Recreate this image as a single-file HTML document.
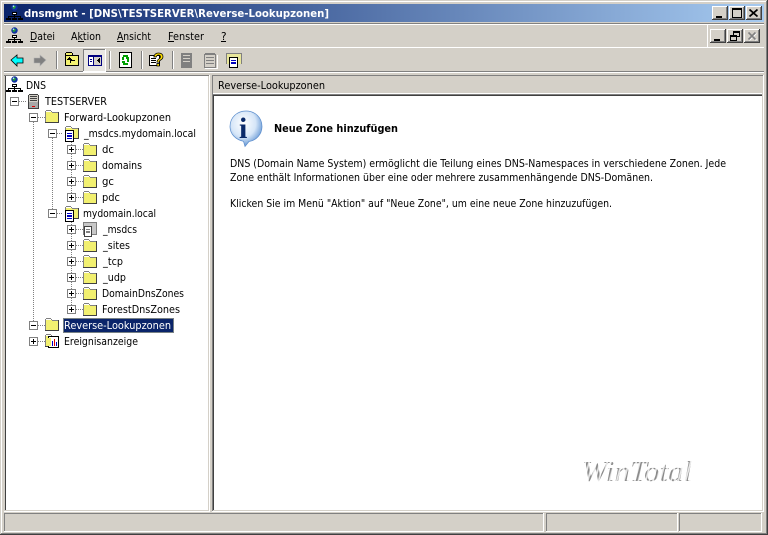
<!DOCTYPE html>
<html><head><meta charset="utf-8"><title>dnsmgmt</title>
<style>
html,body{margin:0;padding:0;background:#d4d0c8;overflow:hidden}
svg{display:block}
text{font-family:"DejaVu Sans",sans-serif;font-size:10.5px;fill:#000;white-space:pre}
.c{shape-rendering:crispEdges}
</style></head><body>
<svg width="768" height="535" viewBox="0 0 768 535" xmlns="http://www.w3.org/2000/svg">
<defs>
<linearGradient id="tb" x1="0" x2="1" y1="0" y2="0"><stop offset="0" stop-color="#0a246a"/><stop offset="1" stop-color="#a6caf0"/></linearGradient>
<pattern id="wm" width="3.500" height="3.500" patternUnits="userSpaceOnUse" patternTransform="rotate(15)"><rect width="3.500" height="3.500" fill="#e8e8e8"/><rect width="1.800" height="3.500" fill="#8a8a8a"/></pattern>
<radialGradient id="ib" cx=".42" cy=".35" r=".7"><stop offset="0" stop-color="#fff"/><stop offset=".55" stop-color="#d6e6f8"/><stop offset="1" stop-color="#4d86cc"/></radialGradient>

<symbol id="folder" width="16" height="16" viewBox="0 0 16 16" overflow="visible">
<g class="c"><rect x="1" y="4" width="13" height="10" fill="#f2f070"/>
<rect x="2" y="2" width="5" height="1" fill="#808080"/><rect x="1" y="3" width="1" height="11" fill="#808080"/><rect x="7" y="3" width="1" height="1" fill="#808080"/><rect x="2" y="3" width="5" height="1" fill="#fff"/>
<rect x="8" y="4" width="6" height="1" fill="#808080"/><rect x="14" y="4" width="1" height="11" fill="#404040"/><rect x="1" y="14" width="14" height="1" fill="#404040"/></g>
</symbol>
<symbol id="zone" width="18" height="18" viewBox="0 0 18 18" overflow="visible">
<use href="#folder" x="1" y="-1"/>
<g class="c"><rect x="2" y="5" width="9" height="12" fill="#000"/><rect x="3" y="6" width="7" height="10" fill="#fff"/><rect x="4" y="8" width="5" height="1" fill="#0000c0"/><rect x="4" y="10" width="5" height="2" fill="#0000c0"/><rect x="4" y="13" width="5" height="1" fill="#0000c0"/></g>
</symbol>
<symbol id="net" width="17" height="17" viewBox="0 0 17 17" overflow="visible">
<circle cx="8.5" cy="3.5" r="3.2" fill="#1030a0"/><path d="M6.500 2.500l2-1 1.500 1-1 2-2 .5z" fill="#20a040"/><circle cx="7.500" cy="2.200" r=".8" fill="#bfe0ff"/>
<g class="c"><rect x="6" y="8" width="5" height="3" fill="#000"/><rect x="7" y="9" width="3" height="1" fill="#fff"/>
<rect x="2" y="12" width="13" height="1" fill="#000"/><rect x="2" y="12" width="1" height="2" fill="#000"/><rect x="14" y="12" width="1" height="2" fill="#000"/><rect x="8" y="11" width="1" height="3" fill="#000"/>
<rect x="0" y="14" width="5" height="2" fill="#000"/><rect x="6" y="14" width="5" height="2" fill="#000"/><rect x="12" y="14" width="5" height="2" fill="#000"/></g>
</symbol>
<symbol id="plus" width="9" height="9" viewBox="0 0 9 9" overflow="visible"><g class="c"><rect x=".5" y=".5" width="8" height="8" fill="#fff" stroke="#808080"/><rect x="2" y="4" width="5" height="1" fill="#000"/><rect x="4" y="2" width="1" height="5" fill="#000"/></g></symbol>
<symbol id="minus" width="9" height="9" viewBox="0 0 9 9" overflow="visible"><g class="c"><rect x=".5" y=".5" width="8" height="8" fill="#fff" stroke="#808080"/><rect x="2" y="4" width="5" height="1" fill="#000"/></g></symbol>
<symbol id="btn" width="16" height="14" viewBox="0 0 16 14" overflow="visible"><g class="c"><rect width="16" height="14" fill="#404040"/><rect width="15" height="13" fill="#fff"/><rect x="1" y="1" width="14" height="12" fill="#808080"/><rect x="1" y="1" width="13" height="11" fill="#d4d0c8"/></g></symbol>
</defs>

<rect width="768" height="535" fill="#d4d0c8"/>
<g class="c">
<rect x="1" y="1" width="766" height="1" fill="#fff"/><rect x="1" y="1" width="1" height="532" fill="#fff"/>
<rect x="767" y="0" width="1" height="535" fill="#404040"/><rect x="766" y="1" width="1" height="533" fill="#808080"/>
<rect x="0" y="534" width="768" height="1" fill="#404040"/><rect x="1" y="533" width="766" height="1" fill="#808080"/>
<rect x="4" y="4" width="760" height="18" fill="url(#tb)"/>
<rect x="4" y="23" width="760" height="1" fill="#808080"/>
<rect x="4" y="24" width="760" height="1" fill="#fff"/>
<rect x="4" y="47" width="760" height="1" fill="#fff"/>
<rect x="707" y="24" width="1" height="23" fill="#fff"/>
<rect x="4" y="71" width="760" height="1" fill="#808080"/>
<rect x="4" y="72" width="760" height="1" fill="#fff"/>
<rect x="56" y="51" width="1" height="18" fill="#808080"/><rect x="57" y="51" width="1" height="18" fill="#fff"/>
<rect x="109" y="51" width="1" height="18" fill="#808080"/><rect x="110" y="51" width="1" height="18" fill="#fff"/>
<rect x="141" y="51" width="1" height="18" fill="#808080"/><rect x="142" y="51" width="1" height="18" fill="#fff"/>
<rect x="172" y="51" width="1" height="18" fill="#808080"/><rect x="173" y="51" width="1" height="18" fill="#fff"/>
<!-- left pane -->
<rect x="5" y="75" width="205" height="437" fill="#fff"/>
<rect x="4" y="75" width="205" height="1" fill="#808080"/>
<rect x="5" y="76" width="1" height="434" fill="#404040"/>
<rect x="208" y="76" width="1" height="435" fill="#d4d0c8"/><rect x="5" y="510" width="204" height="1" fill="#d4d0c8"/>
<rect x="209" y="75" width="1" height="437" fill="#fff"/><rect x="4" y="511" width="206" height="1" fill="#fff"/>
<!-- right pane -->
<rect x="212" y="75" width="552" height="437" fill="#fff"/>
<rect x="212" y="75" width="552" height="1" fill="#808080"/><rect x="212" y="75" width="1" height="436" fill="#808080"/>
<rect x="213" y="76" width="550" height="19" fill="#d4d0c8"/>
<rect x="213" y="96" width="1" height="414" fill="#404040"/>
<rect x="213" y="93" width="550" height="1" fill="#fff"/>
<rect x="213" y="94" width="550" height="1" fill="#808080"/><rect x="213" y="95" width="550" height="1" fill="#404040"/>
<rect x="762" y="76" width="1" height="435" fill="#d4d0c8"/><rect x="213" y="510" width="550" height="1" fill="#d4d0c8"/>
<rect x="763" y="75" width="1" height="437" fill="#fff"/><rect x="212" y="511" width="552" height="1" fill="#fff"/>
<!-- status -->
<rect x="4" y="513" width="540" height="1" fill="#808080"/><rect x="4" y="513" width="1" height="18" fill="#808080"/><rect x="4" y="531" width="540" height="1" fill="#fff"/><rect x="543" y="513" width="1" height="19" fill="#fff"/>
<rect x="546" y="513" width="131" height="1" fill="#808080"/><rect x="546" y="513" width="1" height="18" fill="#808080"/><rect x="546" y="531" width="132" height="1" fill="#fff"/><rect x="677" y="513" width="1" height="19" fill="#fff"/>
<rect x="679" y="513" width="83" height="1" fill="#808080"/><rect x="679" y="513" width="1" height="18" fill="#808080"/><rect x="679" y="531" width="83" height="1" fill="#fff"/><rect x="761" y="513" width="1" height="19" fill="#fff"/>
</g>

<!-- title content -->
<use href="#net" x="6" y="4"/>
<text x="24" y="17" textLength="305" lengthAdjust="spacingAndGlyphs" style="font-weight:bold;font-size:11px;fill:#fff">dnsmgmt - [DNS\TESTSERVER\Reverse-Lookupzonen]</text>
<use href="#btn" x="712" y="6"/><use href="#btn" x="729" y="6"/><use href="#btn" x="746" y="6"/>
<g class="c">
<rect x="716" y="16" width="6" height="2" fill="#000"/>
<rect x="732.500" y="8.500" width="9" height="9" fill="none" stroke="#000"/><rect x="732" y="8" width="10" height="2" fill="#000"/>
</g>
<path d="M749.500 9.500l8 7M757.500 9.500l-8 7" stroke="#000" stroke-width="1.800" fill="none"/>

<!-- menu -->
<use href="#net" x="6" y="27"/>
<text x="30" y="40" textLength="25" lengthAdjust="spacingAndGlyphs">Datei</text>
<text x="71" y="40" textLength="30" lengthAdjust="spacingAndGlyphs">Aktion</text>
<text x="117" y="40" textLength="34" lengthAdjust="spacingAndGlyphs">Ansicht</text>
<text x="168" y="40" textLength="36" lengthAdjust="spacingAndGlyphs">Fenster</text>
<text x="221" y="40">?</text>
<g class="c" fill="#000"><rect x="30" y="41" width="7" height="1"/><rect x="78" y="41" width="6" height="1"/><rect x="117" y="41" width="7" height="1"/><rect x="168" y="41" width="6" height="1"/><rect x="221" y="41" width="5" height="1"/></g>
<use href="#btn" x="710" y="29"/><use href="#btn" x="727" y="29"/><use href="#btn" x="744" y="29"/>
<g class="c">
<rect x="714" y="39" width="6" height="2" fill="#000"/>
<rect x="733.500" y="31.500" width="6" height="5" fill="none" stroke="#000"/><rect x="733" y="31" width="7" height="2" fill="#000"/>
<rect x="730.500" y="35.500" width="6" height="5" fill="#d4d0c8" stroke="#000"/><rect x="730" y="35" width="7" height="2" fill="#000"/>
</g>
<path d="M748.500 32.500l7 7M755.500 32.500l-7 7" stroke="#fff" stroke-width="1.600" transform="translate(.7 .7)" fill="none"/>
<path d="M748.500 32.500l7 7M755.500 32.500l-7 7" stroke="#808080" stroke-width="1.600" fill="none"/>

<!-- toolbar icons -->
<path d="M11 60l6-5v3h6v5h-6v3z" fill="#00ffff" stroke="#000" stroke-width=".8"/>
<path d="M46 60l-6-5v3h-6v5h6v3z" fill="#808080" stroke="#b0b0b0" stroke-width=".6"/>
<g class="c">
<rect x="65" y="55" width="14" height="11" fill="#f2f070"/>
<rect x="65" y="55" width="14" height="1" fill="#000"/><rect x="65" y="55" width="1" height="11" fill="#000"/><rect x="78" y="55" width="1" height="11" fill="#000"/><rect x="65" y="65" width="14" height="1" fill="#000"/>
<rect x="66" y="52" width="6" height="1" fill="#000"/><rect x="65" y="53" width="1" height="2" fill="#000"/><rect x="72" y="53" width="1" height="2" fill="#000"/><rect x="66" y="53" width="6" height="2" fill="#f2f070"/>
<rect x="70" y="60" width="5" height="1" fill="#000"/><rect x="70" y="60" width="1" height="3" fill="#000"/><rect x="69" y="57" width="1" height="1" fill="#000"/><rect x="68" y="58" width="3" height="1" fill="#000"/><rect x="67" y="59" width="5" height="1" fill="#000"/>
<rect x="83" y="49" width="22" height="22" fill="#e9e7e3"/>
<rect x="83" y="49" width="22" height="1" fill="#808080"/><rect x="83" y="49" width="1" height="22" fill="#808080"/><rect x="105" y="49" width="1" height="23" fill="#fff"/><rect x="83" y="71" width="23" height="1" fill="#fff"/>
<rect x="88" y="55" width="14" height="11" fill="#000080"/><rect x="89" y="57" width="4" height="8" fill="#fff"/><rect x="94" y="57" width="7" height="8" fill="#d4d0c8"/><rect x="90" y="59" width="2" height="1" fill="#000080"/><rect x="90" y="61" width="2" height="1" fill="#000080"/>
<rect x="97" y="60" width="1" height="1" fill="#000"/><rect x="98" y="59" width="1" height="3" fill="#000"/><rect x="99" y="58" width="1" height="5" fill="#000"/>
<rect x="119.500" y="52.500" width="12" height="15" fill="#fff" stroke="#000"/>
<rect x="123" y="55" width="5" height="2" fill="#00a000"/><rect x="122" y="57" width="2" height="3" fill="#00a000"/><rect x="127" y="59" width="2" height="3" fill="#00a000"/><rect x="123" y="63" width="5" height="2" fill="#00a000"/><rect x="126" y="57" width="3" height="2" fill="#00a000"/><rect x="122" y="61" width="3" height="2" fill="#00a000"/>
<rect x="149.500" y="55.500" width="10" height="10" fill="#fff" stroke="#000"/>
<rect x="151" y="58" width="5" height="1" fill="#000"/><rect x="151" y="60" width="5" height="1" fill="#000"/><rect x="151" y="62" width="5" height="1" fill="#000"/>
<rect x="181" y="53" width="11" height="15" fill="#808080"/><rect x="183" y="55" width="7" height="1" fill="#d4d0c8"/><rect x="183" y="58" width="7" height="1" fill="#d4d0c8"/><rect x="183" y="61" width="7" height="1" fill="#d4d0c8"/>
<rect x="204.500" y="54.500" width="11" height="13" fill="#d4d0c8" stroke="#808080"/><rect x="205" y="53" width="10" height="1" fill="#808080"/><rect x="206" y="57" width="8" height="1" fill="#808080"/><rect x="206" y="60" width="8" height="1" fill="#808080"/><rect x="206" y="63" width="8" height="1" fill="#808080"/><rect x="217" y="55" width="1" height="14" fill="#fff"/><rect x="205" y="68" width="13" height="1" fill="#fff"/>
<rect x="226" y="53" width="16" height="11" fill="#e8e69a"/>
<rect x="226" y="53" width="15" height="1" fill="#808080"/><rect x="226" y="53" width="1" height="11" fill="#808080"/><rect x="241" y="53" width="1" height="11" fill="#808080"/>
<rect x="229" y="57" width="9" height="11" fill="#000"/><rect x="230" y="58" width="7" height="9" fill="#fff"/><rect x="231" y="60" width="5" height="1" fill="#0000c0"/><rect x="231" y="62" width="5" height="2" fill="#0000c0"/>
</g>
<text x="153" y="66" style="font-family:'Liberation Sans',sans-serif;font-weight:bold;font-size:18px;fill:#ffe000;stroke:#000;stroke-width:.8">?</text>

<!-- tree lines -->
<g stroke="#808080" stroke-dasharray="1 1" fill="none" class="c">
<path d="M33.500 122V326M52.500 138V214M71.500 138V198M71.500 218V310"/>
<path d="M19 101.500H27M38 117.500H45M57 133.500H63M76 149.500H83M76 165.500H83M76 181.500H83M76 197.500H83M57 213.500H63M76 229.500H83M76 245.500H83M76 261.500H83M76 277.500H83M76 293.500H83M76 309.500H83M38 325.500H45M38 341.500H45"/>
</g>
<use href="#minus" x="10" y="97"/><use href="#minus" x="29" y="113"/><use href="#minus" x="48" y="129"/><use href="#minus" x="48" y="209"/><use href="#minus" x="29" y="321"/><use href="#plus" x="29" y="337"/>
<use href="#plus" x="67" y="145"/><use href="#plus" x="67" y="161"/><use href="#plus" x="67" y="177"/><use href="#plus" x="67" y="193"/>
<use href="#plus" x="67" y="225"/><use href="#plus" x="67" y="241"/><use href="#plus" x="67" y="257"/><use href="#plus" x="67" y="273"/><use href="#plus" x="67" y="289"/><use href="#plus" x="67" y="305"/>

<!-- tree icons -->
<use href="#net" x="6" y="76"/>
<g class="c"><rect x="29" y="94" width="9" height="14" fill="#d4d0c8"/><rect x="29" y="94" width="9" height="1" fill="#404040"/><rect x="28" y="95" width="1" height="14" fill="#404040"/><rect x="38" y="95" width="1" height="14" fill="#404040"/><rect x="28" y="108" width="11" height="1" fill="#404040"/><rect x="30" y="96" width="7" height="1" fill="#404040"/><rect x="30" y="98" width="7" height="1" fill="#404040"/><rect x="30" y="100" width="7" height="1" fill="#404040"/><rect x="29" y="102" width="9" height="6" fill="#a8a8a8"/><rect x="32" y="106" width="3" height="1" fill="#e00000"/></g>
<use href="#folder" x="44" y="108"/>
<use href="#zone" x="63" y="125"/>
<use href="#folder" x="82" y="141"/><use href="#folder" x="82" y="157"/><use href="#folder" x="82" y="173"/><use href="#folder" x="82" y="189"/>
<use href="#zone" x="63" y="205"/>
<g class="c"><rect x="83.500" y="222.500" width="13" height="12" fill="#c8c8c8" stroke="#808080"/><rect x="84" y="226" width="8" height="11" fill="#404040"/><rect x="85" y="227" width="6" height="9" fill="#fff"/><rect x="86" y="229" width="4" height="1" fill="#808080"/><rect x="86" y="231" width="4" height="2" fill="#808080"/></g>
<use href="#folder" x="82" y="237"/><use href="#folder" x="82" y="253"/><use href="#folder" x="82" y="269"/><use href="#folder" x="82" y="285"/><use href="#folder" x="82" y="301"/>
<use href="#folder" x="44" y="316"/>
<use href="#folder" x="44" y="332"/>
<g class="c"><rect x="48" y="336" width="11" height="12" fill="#000"/><rect x="49" y="337" width="9" height="10" fill="#fff"/><rect x="48" y="338" width="3" height="8" fill="#f2f070"/><rect x="52" y="341" width="1" height="5" fill="#0000c0"/><rect x="54" y="339" width="1" height="7" fill="#e00000"/><rect x="56" y="342" width="1" height="4" fill="#0000c0"/></g>

<!-- tree text -->
<text x="26" y="89" textLength="20" lengthAdjust="spacingAndGlyphs">DNS</text>
<text x="45" y="105" textLength="62" lengthAdjust="spacingAndGlyphs">TESTSERVER</text>
<text x="64" y="121" textLength="107" lengthAdjust="spacingAndGlyphs">Forward-Lookupzonen</text>
<text x="84" y="137" textLength="112" lengthAdjust="spacingAndGlyphs">_msdcs.mydomain.local</text>
<text x="102" y="153" textLength="12" lengthAdjust="spacingAndGlyphs">dc</text>
<text x="102" y="169" textLength="40" lengthAdjust="spacingAndGlyphs">domains</text>
<text x="102" y="185" textLength="12" lengthAdjust="spacingAndGlyphs">gc</text>
<text x="102" y="201" textLength="18" lengthAdjust="spacingAndGlyphs">pdc</text>
<text x="83" y="217" textLength="73" lengthAdjust="spacingAndGlyphs">mydomain.local</text>
<text x="103" y="233" textLength="34" lengthAdjust="spacingAndGlyphs">_msdcs</text>
<text x="103" y="249" textLength="27" lengthAdjust="spacingAndGlyphs">_sites</text>
<text x="103" y="265" textLength="20" lengthAdjust="spacingAndGlyphs">_tcp</text>
<text x="103" y="281" textLength="23" lengthAdjust="spacingAndGlyphs">_udp</text>
<text x="102" y="297" textLength="82" lengthAdjust="spacingAndGlyphs">DomainDnsZones</text>
<text x="102" y="313" textLength="78" lengthAdjust="spacingAndGlyphs">ForestDnsZones</text>
<rect x="63" y="318" width="111" height="15" fill="#0a246a" class="c"/>
<rect x="63.500" y="318.500" width="110" height="14" fill="none" stroke="#e8e0a0" stroke-dasharray="1 1" class="c"/>
<text x="64" y="329" textLength="107" lengthAdjust="spacingAndGlyphs" style="fill:#fff">Reverse-Lookupzonen</text>
<text x="64" y="345" textLength="74" lengthAdjust="spacingAndGlyphs">Ereignisanzeige</text>

<!-- right pane -->
<text x="218" y="89" textLength="107" lengthAdjust="spacingAndGlyphs">Reverse-Lookupzonen</text>
<path d="M246 111c9 0 16 6.500 16 15.500 0 8-6 14-13 15l-4 5-1.500-5.200c-7.500-1.500-13.500-7-13.500-14.800 0-9 7-15.500 16-15.500z" fill="url(#ib)" stroke="#5a8ccc" stroke-width=".7"/>
<text x="239" y="138" style="font-family:'Liberation Serif',serif;font-weight:bold;font-size:30px;fill:#0a2a6a">i</text>
<text x="274" y="132" textLength="124" lengthAdjust="spacingAndGlyphs" style="font-weight:bold">Neue Zone hinzufügen</text>
<text x="230" y="167" textLength="496" lengthAdjust="spacingAndGlyphs">DNS (Domain Name System) ermöglicht die Teilung eines DNS-Namespaces in verschiedene Zonen. Jede</text>
<text x="230" y="181" textLength="423" lengthAdjust="spacingAndGlyphs">Zone enthält Informationen über eine oder mehrere zusammenhängende DNS-Domänen.</text>
<text x="230" y="207" textLength="382" lengthAdjust="spacingAndGlyphs">Klicken Sie im Menü "Aktion" auf "Neue Zone", um eine neue Zone hinzuzufügen.</text>
<text x="582" y="481" textLength="110" lengthAdjust="spacingAndGlyphs" style="font-family:'Liberation Serif',serif;font-style:italic;font-size:28px;fill:url(#wm)">WinTotal</text>
</svg>
</body></html>
